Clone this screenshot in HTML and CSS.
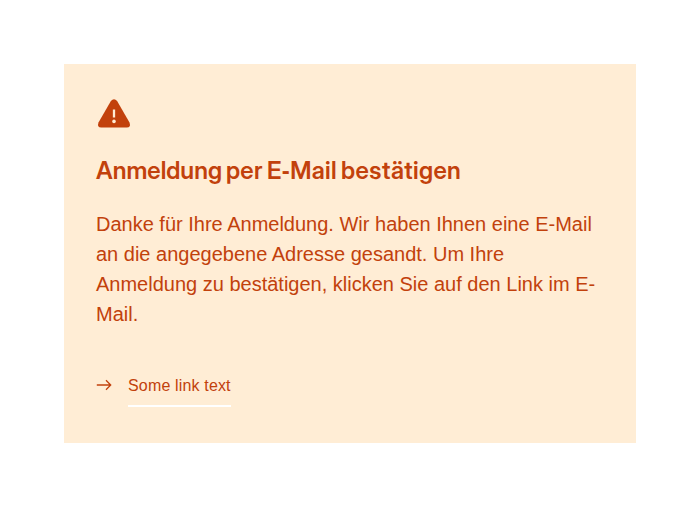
FILE: index.html
```html
<!DOCTYPE html>
<html lang="de">
<head>
<meta charset="utf-8">
<title>Anmeldung</title>
<link rel="stylesheet" href="styles.css">
</head>
<body>
<section class="alert">
  <svg class="alert-icon" viewBox="0 0 36 36" aria-hidden="true">
    <path class="triangle" d="M14.900 4.900Q18 1.500 21.100 4.900L33.500 26.500Q35.200 31.500 30.800 31.500H5.200Q.8 31.500 2.500 26.500Z"/>
    <path class="mark" d="M18 13.500V21.500"/>
    <circle class="dot" cx="18" cy="25.400" r="1.800"/>
  </svg>
  <h2 class="alert-title">Anmeldung <span class="title-rest">per E<span class="hyphen">-</span>Mail bestätigen</span></h2>
  <p class="alert-text">Danke für Ihre Anmeldung. Wir haben Ihnen eine E-Mail an die angegebene Adresse gesandt. Um Ihre Anmeldung zu bestätigen, klicken Sie auf den Link im E-Mail.</p>
  <a class="alert-link" href="#">
    <svg class="arrow" viewBox="0 0 16 16" aria-hidden="true"><path d="M.8 8H14.800M10 3.300L14.700 8L10 12.700"/></svg>
    <span class="link-label">Some link text</span>
  </a>
</section>
</body>
</html>
```
FILE: styles.css
```css
body {
  margin: 0;
  padding: 64px;
  background: #fff;
}
.alert {
  box-sizing: border-box;
  height: 379px;
  padding: 32px;
  background: #ffedd5;
  color: #c2410c;
  font-family: "Liberation Sans", Arial, sans-serif;
}
.alert-icon {
  display: block;
  width: 36px;
  height: 36px;
}
.triangle { fill: #c2410c; }
.mark { stroke: #ffedd5; stroke-width: 2.300; }
.dot { fill: #ffedd5; }
.alert-title {
  margin: 21px 0 0;
  font: 600 24px/36px "Inter Display", Inter, sans-serif;
  font-feature-settings: "calt" 0;
  letter-spacing: 0.03px;
  word-spacing: -1.6px;
}
.title-rest { letter-spacing: 0.36px; }
.hyphen { font-family: "Liberation Sans", Arial, sans-serif; line-height: 1; }
.alert-text {
  margin: 20px 0 0;
  font-size: 20px;
  line-height: 30px;
}
.alert-link {
  display: inline-flex;
  align-items: flex-start;
  gap: 16px;
  margin-top: 36px;
  color: inherit;
  font-size: 16px;
  letter-spacing: 0.16px;
  text-decoration: none;
}
.arrow {
  width: 16px;
  height: 16px;
  margin-top: 12px;
  fill: none;
  stroke: #c2410c;
  stroke-width: 1.300;
}
.link-label {
  padding-top: 2px;
  line-height: 38px;
  border-bottom: 2px solid #fff;
}
```
